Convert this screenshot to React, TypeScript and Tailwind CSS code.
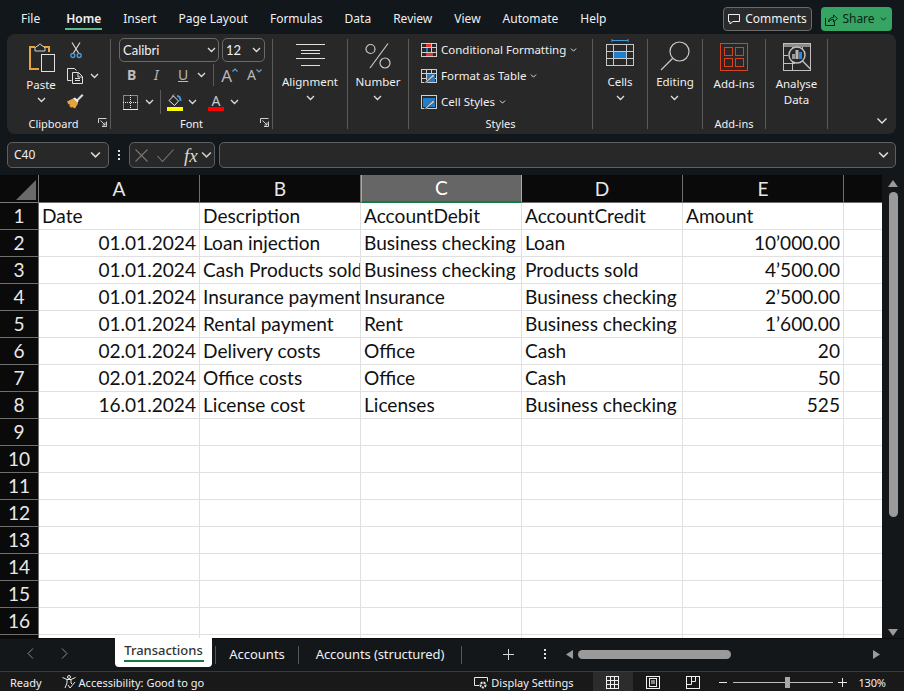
import type { ReactNode } from "react";

const uiFont = "font-['Noto_Sans','Open_Sans',sans-serif]";

const tabs = ["File", "Home", "Insert", "Page Layout", "Formulas", "Data", "Review", "View", "Automate", "Help"];
const columns = ["A", "B", "C", "D", "E"];

type Row = { date?: string; desc?: string; debit?: string; credit?: string; amount?: string };

const rows: Row[] = [
  { date: "Date", desc: "Description", debit: "AccountDebit", credit: "AccountCredit", amount: "Amount" },
  { date: "01.01.2024", desc: "Loan injection", debit: "Business checking", credit: "Loan", amount: "10’000.00" },
  { date: "01.01.2024", desc: "Cash Products sold", debit: "Business checking", credit: "Products sold", amount: "4’500.00" },
  { date: "01.01.2024", desc: "Insurance payment", debit: "Insurance", credit: "Business checking", amount: "2’500.00" },
  { date: "01.01.2024", desc: "Rental payment", debit: "Rent", credit: "Business checking", amount: "1’600.00" },
  { date: "02.01.2024", desc: "Delivery costs", debit: "Office", credit: "Cash", amount: "20" },
  { date: "02.01.2024", desc: "Office costs", debit: "Office", credit: "Cash", amount: "50" },
  { date: "16.01.2024", desc: "License cost", debit: "Licenses", credit: "Business checking", amount: "525" },
  {}, {}, {}, {}, {}, {}, {}, {}, {},
];

function Chevron({ className = "" }: { className?: string }) {
  return (
    <svg width="9" height="6" viewBox="0 0 9 6" fill="none" stroke="currentColor" strokeWidth="1.3" className={className}>
      <path d="M1 1l3.5 3.5L8 1" />
    </svg>
  );
}

function Launcher() {
  return (
    <svg width="9" height="9" viewBox="0 0 9 9" fill="none" stroke="#cfcfcf" strokeWidth="1">
      <path d="M.5 5V.5H8.500M8.500 3.500V8.500H4M2.500 2.500L7 7M7 4.500V7H4.500" />
    </svg>
  );
}

function Group({ width, label, children, launcher, pad = "", labelShift = "" }: { width: string; label?: string; children: ReactNode; launcher?: boolean; pad?: string; labelShift?: string }) {
  return (
    <div className={`${width} flex flex-col h-[90px] border-r border-[#5a5a5a] shrink-0`}>
      <div className={`flex-1 min-h-0 ${pad}`}>{children}</div>
      <div className={`h-[15px] pt-[3px] flex items-center justify-center relative text-[11px] text-[#f0f0f0] leading-none ${labelShift}`}>
        {label}
        {launcher && (
          <span className="absolute right-[3px] top-[4px]">
            <Launcher />
          </span>
        )}
      </div>
    </div>
  );
}

function BigButton({ icon, text }: { icon: ReactNode; text: string }) {
  return (
    <div className="flex flex-col items-center text-[11.5px] leading-[12px] text-[#f0f0f0]">
      <div className="h-[37px] flex items-start justify-center">{icon}</div>
      <span>{text}</span>
      <Chevron className="mt-[7px] text-[#e0e0e0]" />
    </div>
  );
}

function PasteIcon() {
  return (
    <svg width="28" height="30" viewBox="0 0 28 30" fill="none">
      <path d="M7 4H2v22h9" stroke="#e8a33d" strokeWidth="2" />
      <path d="M16 4h5v5" stroke="#e8a33d" strokeWidth="2" />
      <path d="M7 5l2-2h1l1.500-2h1L14 3h1l2 2v3H7z" stroke="#d0d0d0" strokeWidth="1" />
      <rect x="13.500" y="11.500" width="13" height="17" stroke="#e0e0e0" fill="#282828" />
    </svg>
  );
}

function ScissorsIcon() {
  return (
    <svg width="12" height="17" viewBox="0 0 12 17" fill="none">
      <path d="M2 .5L8.500 11M10 .5L3.500 11" stroke="#d8d8d8" strokeWidth="1.200" />
      <circle cx="2.800" cy="13.500" r="2" stroke="#4a9fe0" strokeWidth="1.300" />
      <circle cx="9.200" cy="13.500" r="2" stroke="#4a9fe0" strokeWidth="1.300" />
    </svg>
  );
}

function CopyIcon() {
  return (
    <svg width="17" height="16" viewBox="0 0 17 16" fill="none" stroke="#e0e0e0">
      <path d="M4.500 12.500H.5V.5h7l2 2" />
      <path d="M5.500 4.500h6l4 4v7h-10zM11 4.500v4.500h4.500M8 10.500h5M8 12.500h5" />
    </svg>
  );
}

function BrushIcon() {
  return (
    <svg width="17" height="16" viewBox="0 0 17 16" fill="none">
      <path d="M0 8.500l6-3 5 5-3 5L5 14l-1 1-1-2-1 .5L3 11l-1.500.5z" fill="#e8a33d" />
      <path d="M9 7l6-6 1.500 1.500-6 6z" fill="#d8d8d8" />
      <path d="M6 5.500l2-1 3.500 3.500-1 2z" fill="#f4f4f4" />
    </svg>
  );
}

function BordersIcon() {
  return (
    <svg width="15" height="15" viewBox="0 0 15 15" fill="none" stroke="#e8e8e8" strokeDasharray="1 1">
      <rect x=".5" y=".5" width="14" height="14" />
      <path d="M7.500 0v15M0 7.500h15" />
      <path d="M0 14.500h15" strokeDasharray="none" />
    </svg>
  );
}

function FillIcon() {
  return (
    <svg width="16" height="17" viewBox="0 0 16 17" fill="none">
      <path d="M2 6.500L6.500 2l5 5L7.500 11.500z" stroke="#e8e8e8" />
      <path d="M5 2.500l2-2" stroke="#e8e8e8" />
      <path d="M10 2c2.500 0 3.500 2 3.500 5" stroke="#3f9be0" strokeWidth="2" />
      <rect y="13" width="16" height="4" fill="#ffff00" />
    </svg>
  );
}

function GrowFontIcon({ size, up }: { size: number; up: boolean }) {
  return (
    <span className={`flex items-start text-[#b8b8b8] leading-none ${size === 17 ? "text-[17px]" : "text-[14px]"}`}>
      A
      <svg width="6" height="4" viewBox="0 0 6 4" fill="none" stroke="#5aa7e0" strokeWidth="1.200" className="mt-[1px]">
        <path d={up ? "M.5 3.500L3 1l2.500 2.500" : "M.5.5L3 3 5.500.5"} />
      </svg>
    </span>
  );
}

function AlignIcon() {
  return (
    <svg width="29" height="22" viewBox="0 0 29 22" stroke="#e0e0e0" className="mt-[5px]">
      <path d="M0 .5h29M5 6.500h19M0 14.500h29M5 21.500h19M5 9.500h19" />
    </svg>
  );
}

function PercentIcon() {
  return (
    <svg width="26" height="26" viewBox="0 0 26 26" fill="none" stroke="#c8c8c8" strokeWidth="1.200" className="mt-[4px]">
      <circle cx="5.500" cy="6" r="4.500" />
      <circle cx="20" cy="20" r="5" />
      <path d="M23 .5L5 25" />
    </svg>
  );
}

function CondIcon() {
  return (
    <svg width="16" height="14" viewBox="0 0 16 14" fill="none">
      <rect x=".5" y=".5" width="15" height="13" stroke="#d0d0d0" />
      <path d="M5.500 0v14M10.500 0v14M0 4.500h16M0 9.500h16" stroke="#d0d0d0" />
      <rect x="5" y="1" width="5" height="3" fill="#e8352b" />
      <rect x="5" y="5" width="2" height="4" fill="#1e7fd0" />
      <rect x="5" y="10" width="7" height="3" fill="#e8352b" />
    </svg>
  );
}

function TableIcon({ solid }: { solid?: boolean }) {
  return (
    <svg width="16" height="15" viewBox="0 0 16 15" fill="none">
      <rect x=".5" y=".5" width="15" height="13" stroke="#d0d0d0" />
      {solid ? (
        <rect x="2" y="3" width="12" height="9" fill="#1e7fd0" />
      ) : (
        <>
          <path d="M5.500 0v14M10.500 0v14M0 4.500h16M0 9.500h16" stroke="#d0d0d0" />
          <rect x="6" y="5" width="8" height="8" fill="#1e7fd0" />
        </>
      )}
      <path d="M3 14l9-9 2 2-9 7z" fill="#bfbfbf" stroke="#282828" strokeWidth=".5" />
    </svg>
  );
}

function StyleRow({ icon, text }: { icon: ReactNode; text: string }) {
  return (
    <div className="flex items-center h-[26px]">
      <span className="w-[16px] h-[15px] flex mr-[4px]">{icon}</span>
      <span className="text-[11.5px] text-[#f0f0f0] whitespace-nowrap leading-none">{text}</span>
      <Chevron className="ml-[3px] scale-75 text-[#e0e0e0]" />
    </div>
  );
}

function CellsIcon() {
  return (
    <svg width="28" height="28" viewBox="0 0 28 28" fill="none">
      <path d="M6 1.500h16M6 0v3M22 0v3" stroke="#3f9be0" />
      <rect x=".5" y="5.500" width="27" height="21" stroke="#c8c8c8" />
      <path d="M7.500 5v22M20.500 5v22M0 12.500h28M0 19.500h28" stroke="#c8c8c8" />
      <rect x="8" y="13" width="12" height="6" fill="#1e7fd0" />
    </svg>
  );
}

function SearchIcon() {
  return (
    <svg width="30" height="30" viewBox="0 0 30 30" fill="none" stroke="#c8c8c8" strokeWidth="1.200" className="mt-[2px]">
      <circle cx="19.500" cy="10.500" r="9.500" />
      <path d="M12.500 17.500L1 29" />
    </svg>
  );
}

function AddinsIcon() {
  return (
    <svg width="28" height="28" viewBox="0 0 28 28" fill="none" stroke="#d9421c">
      <rect x=".5" y=".5" width="27" height="27" />
      <rect x="4.500" y="4.500" width="8" height="8" />
      <rect x="15.500" y="4.500" width="8" height="8" />
      <rect x="4.500" y="15.500" width="8" height="8" />
      <rect x="15.500" y="15.500" width="8" height="8" />
    </svg>
  );
}

function AnalyseIcon() {
  return (
    <svg width="28" height="28" viewBox="0 0 28 28" fill="none" stroke="#c0c0c0">
      <rect x=".5" y=".5" width="27" height="27" />
      <rect x="1" y="1" width="26" height="3" fill="#8a8a8a" stroke="none" />
      <path d="M9.500 4v24M19.500 4v6M0 20.500h12M0 12.500h5" />
      <circle cx="14" cy="12" r="8" fill="#282828" strokeWidth="1.500" />
      <path d="M19.500 18l8 8" strokeWidth="1.500" />
      <rect x="9" y="11" width="3" height="5" fill="#9a9a9a" stroke="none" />
      <rect x="12.500" y="7" width="3" height="9" fill="#b8b8b8" stroke="none" />
      <rect x="16" y="9" width="3" height="7" fill="#2a8ae0" stroke="none" />
    </svg>
  );
}

function Ribbon() {
  return (
    <div className={`h-[100px] ml-[7px] w-[889px] rounded-[8px] bg-[#282828] flex pt-[5px] shrink-0 text-[#f0f0f0] ${uiFont}`}>
      <Group width="w-[104px]" label="Clipboard" launcher labelShift="pr-[10px]">
        <div className="flex pl-[20px] pt-[4px]">
          <div className="flex flex-col items-center w-[28px]">
            <span className="ml-[2px]"><PasteIcon /></span>
            <span className="text-[11.5px] leading-none mt-[6px]">Paste</span>
            <Chevron className="mt-[6px] text-[#e0e0e0]" />
          </div>
          <div className="flex flex-col ml-[12px] gap-[9px] -mt-[1px]">
            <span className="pl-[3px]"><ScissorsIcon /></span>
            <span className="flex items-center gap-[6px]"><CopyIcon /><Chevron className="text-[#e0e0e0]" /></span>
            <BrushIcon />
          </div>
        </div>
      </Group>
      <Group width="w-[162px]" label="Font" launcher pad="pl-[8px]">
        <div className="flex gap-[3px] -mt-[1px]">
          <div className="w-[100px] h-[24px] border border-[#6a6a6a] rounded-[5px] flex items-center justify-between px-[2px] text-[13px] leading-none font-['Lato',sans-serif]">
            <span className="pl-[1px]">Calibri</span>
            <Chevron className="text-[#e0e0e0]" />
          </div>
          <div className="w-[43px] h-[24px] border border-[#6a6a6a] rounded-[5px] flex items-center justify-between px-[3px] text-[13px] leading-none font-['Lato',sans-serif]">
            <span>12</span>
            <Chevron className="text-[#e0e0e0]" />
          </div>
        </div>
        <div className="flex items-center h-[22px] mt-[2px] text-[#b8b8b8] leading-none">
          <span className="w-[12px] ml-[8px] font-bold text-[14px] text-[#bdbdbd]">B</span>
          <span className="w-[12px] ml-[15px] italic text-[14px]">I</span>
          <span className="ml-[12px] underline text-[14px]">U</span>
          <Chevron className="ml-[9px] text-[#dddddd]" />
          <span className="w-px h-[22px] bg-[#5a5a5a] ml-[7px]" />
          <span className="ml-[7px]"><GrowFontIcon size={17} up /></span>
          <span className="ml-[9px]"><GrowFontIcon size={14} up={false} /></span>
        </div>
        <div className="flex items-center h-[24px] mt-[4px] ml-[4px]">
          <BordersIcon />
          <Chevron className="ml-[7px] text-[#dddddd]" />
          <span className="w-px h-[24px] bg-[#5a5a5a] ml-[6px]" />
          <span className="ml-[6px]"><FillIcon /></span>
          <Chevron className="ml-[5px] text-[#dddddd]" />
          <span className="ml-[11px] w-[16px] flex flex-col items-center text-[14px] leading-[13px] text-[#c8c8c8]">
            A
            <span className="w-[16px] h-[4px] bg-[#ff0000]" />
          </span>
          <Chevron className="ml-[6px] text-[#dddddd]" />
        </div>
      </Group>
      <Group width="w-[75px]" pad="flex justify-center">
        <BigButton icon={<AlignIcon />} text="Alignment" />
      </Group>
      <Group width="w-[61px]" pad="flex justify-center">
        <BigButton icon={<PercentIcon />} text="Number" />
      </Group>
      <Group width="w-[184px]" label="Styles" pad="pl-[12px] -mt-[2px]">
        <StyleRow icon={<CondIcon />} text="Conditional Formatting" />
        <StyleRow icon={<TableIcon />} text="Format as Table" />
        <StyleRow icon={<TableIcon solid />} text="Cell Styles" />
      </Group>
      <Group width="w-[55px]" pad="flex justify-center">
        <BigButton icon={<CellsIcon />} text="Cells" />
      </Group>
      <Group width="w-[55px]" pad="flex justify-center">
        <BigButton icon={<SearchIcon />} text="Editing" />
      </Group>
      <Group width="w-[63px]" label="Add-ins" pad="flex flex-col items-center pt-[4px]">
        <AddinsIcon />
        <span className="text-[11.5px] leading-none mt-[7px] text-[#f0f0f0]">Add-ins</span>
      </Group>
      <Group width="w-[62px]" pad="flex flex-col items-center pt-[4px]">
        <AnalyseIcon />
        <span className="text-[11.5px] leading-[16px] mt-[5px] text-center text-[#f0f0f0]">
          Analyse
          <br />
          Data
        </span>
      </Group>
      <div className="flex-1 flex items-end justify-end pr-[9px] pb-[10px]">
        <svg width="10" height="6" viewBox="0 0 10 6" fill="none" stroke="#e8e8e8" strokeWidth="1.300">
          <path d="M.5.5L5 5 9.500.5" />
        </svg>
      </div>
    </div>
  );
}

function TopBar() {
  return (
    <div className={`h-[34px] flex items-start shrink-0 ${uiFont}`}>
      <div className="flex pl-[21px] gap-[22px] pt-[10px] text-[12px] leading-[18px] text-[#f0f0f0] flex-1">
        {tabs.map((t) => (
          <div key={t} className={`relative whitespace-nowrap ${t === "Home" ? "font-semibold w-[37px] text-center ml-[3px] -mr-[1px]" : ""}`}>
            {t}
            {t === "Home" && <div className="absolute left-0 right-0 top-[18px] h-[2px] bg-[#5fb98a]" />}
          </div>
        ))}
      </div>
      <div className="flex gap-[9px] mt-[7px] mr-[12px]">
        <div className="w-[89px] h-[24px] rounded-[4px] border border-[#6a6a6a] bg-[#2a2a2a] flex items-center justify-center gap-[5px] text-[12px] text-[#f0f0f0]">
          <svg width="12" height="12" viewBox="0 0 12 12" fill="none" stroke="#f0f0f0">
            <path d="M.5 1.500h11v7H5L2 11V8.500H.5z" />
          </svg>
          Comments
        </div>
        <div className="w-[71px] h-[24px] rounded-[4px] bg-[#36a563] flex items-center justify-center gap-[4px] text-[12px] text-[#0c2416]">
          <svg width="13" height="13" viewBox="0 0 13 13" fill="none" stroke="#0c2416">
            <path d="M.5 5v7.500h9V9M3.500 9c0-3 2-4.500 5-4.500V2l4 3.500-4 3.500V6.500c-2 0-4 .5-5 2.500z" />
          </svg>
          Share
          <Chevron className="scale-75" />
        </div>
      </div>
    </div>
  );
}

function FormulaBar() {
  return (
    <div className={`flex items-stretch h-[26px] mt-[8px] mx-[7px] w-[889px] shrink-0 text-[12px] text-[#f0f0f0] ${uiFont}`}>
      <div className="w-[102px] rounded-[5px] border border-[#5f5f5f] bg-[#282828] flex items-center justify-between pl-[6px] pr-[8px]">
        C40
        <Chevron className="text-[#d8d8d8] scale-125" />
      </div>
      <div className="w-[20px] flex flex-col items-center justify-center gap-[2px]">
        <span className="w-[2px] h-[2px] bg-[#e0e0e0]" />
        <span className="w-[2px] h-[2px] bg-[#e0e0e0]" />
        <span className="w-[2px] h-[2px] bg-[#e0e0e0]" />
      </div>
      <div className="w-[86px] rounded-[5px] border border-[#5f5f5f] bg-[#282828] flex items-center pl-[5px]">
        <svg width="13" height="13" viewBox="0 0 13 13" stroke="#777" strokeWidth="1.100"><path d="M.5.5l12 12M12.500.5L.5 12.500" /></svg>
        <svg width="17" height="13" viewBox="0 0 17 13" fill="none" stroke="#777" strokeWidth="1.100" className="ml-[9px]"><path d="M.5 7l5 5.500L16.500.5" /></svg>
        <span className="ml-[10px] font-['Liberation_Serif',serif] italic text-[19px] text-[#d8d8d8] leading-none">fx</span>
        <Chevron className="ml-[4px] text-[#c8c8c8] scale-125" />
      </div>
      <div className="w-[4px]" />
      <div className="flex-1 rounded-[5px] border border-[#5f5f5f] bg-[#282828] flex items-center justify-end pr-[7px]">
        <Chevron className="text-[#d8d8d8] scale-125" />
      </div>
    </div>
  );
}

function Sheet() {
  const cell = "border-r border-b border-[#e0e0e0] overflow-hidden whitespace-nowrap px-[3px] flex items-center";
  return (
    <div className="flex-1 min-w-0 grid grid-cols-[39px_repeat(5,161px)_38px] grid-rows-[28px] auto-rows-[27px] overflow-hidden font-['Lato','Carlito',sans-serif] text-[19.1px] text-[#111111] leading-none">
      <div className="bg-[#0a0a0a] border-r border-b border-[#7a7a7a] flex items-end justify-end pr-[2px] pb-[2px]">
        <svg width="20" height="20" viewBox="0 0 20 20"><path d="M20 0v20H0z" fill="#6a6a6a" /></svg>
      </div>
      {columns.map((c) => (
        <div
          key={c}
          className={`flex items-center justify-center ${c === "C" ? "bg-[#666666] border-x border-b-2 border-x-[#a8a8a8] border-b-[#107c41] text-white" : "border-r border-b bg-[#0a0a0a] border-[#6f6f6f] text-[#e8e8e8]"}`}
        >
          {c}
        </div>
      ))}
      <div className="bg-[#0a0a0a] border-b border-[#6f6f6f]" />
      {rows.map((r, i) => (
        <div key={i} className="contents">
          {/* row 17 only shows a sliver under the tabs, its number stays hidden */}
          <div className="bg-[#0a0a0a] text-[#e8e8e8] border-r border-b border-[#6f6f6f] flex items-center justify-center">{i < 16 ? i + 1 : ""}</div>
          <div className={`${cell} bg-white ${i > 0 ? "justify-end" : ""}`}>{r.date}</div>
          <div className={`${cell} bg-white`}>{r.desc}</div>
          <div className={`${cell} bg-white`}>{r.debit}</div>
          <div className={`${cell} bg-white`}>{r.credit}</div>
          <div className={`${cell} bg-white ${i > 0 ? "justify-end" : ""}`}>{r.amount}</div>
          <div className="border-b border-[#e0e0e0] bg-white" />
        </div>
      ))}
    </div>
  );
}

function VerticalScroll() {
  return (
    <div className="w-[22px] bg-[#14171a] flex flex-col items-center shrink-0">
      <svg width="10" height="7" viewBox="0 0 10 7" className="mt-[5px]"><path d="M5 0l5 7H0z" fill="#9a9a9a" /></svg>
      <div className="w-[9px] h-[325px] rounded-full bg-[#9a9a9a] mt-[5px]" />
      <div className="flex-1" />
      <svg width="10" height="7" viewBox="0 0 10 7" className="mb-[2px]"><path d="M5 7l5-7H0z" fill="#9a9a9a" /></svg>
    </div>
  );
}

function SheetTabs() {
  return (
    <div className={`h-[33px] bg-[#14171a] flex items-start shrink-0 text-[13px] text-[#f0f0f0] leading-none border-t border-[#0c0c0c] ${uiFont}`}>
      <div className="w-[115px] h-[29px] flex items-center pl-[27px] gap-[27px] text-[#8c8c8c]">
        <svg width="7" height="11" viewBox="0 0 7 11" fill="none" stroke="currentColor"><path d="M6 .5l-5 5 5 5" /></svg>
        <svg width="7" height="11" viewBox="0 0 7 11" fill="none" stroke="currentColor"><path d="M1 .5l5 5-5 5" /></svg>
      </div>
      <div className="w-[97px] h-[29px] -mt-[1px] bg-white rounded-b-[4px] text-[#333333] font-medium flex flex-col items-center pt-[6px]">
        <span>Transactions</span>
        <span className="w-[80px] h-[2px] bg-[#107c41] mt-[3px]" />
      </div>
      <div className="w-[3px]" />
      <div className="w-px h-[18px] bg-[#555555] mt-[7px]" />
      <div className="w-[82px] h-[30px] flex items-center justify-center">Accounts</div>
      <div className="w-px h-[18px] bg-[#555555] mt-[7px]" />
      <div className="w-[162px] h-[30px] flex items-center justify-center whitespace-nowrap tracking-[-0.1px]">Accounts (structured)</div>
      <div className="w-px h-[18px] bg-[#555555] mt-[7px]" />
      <div className="w-[41px]" />
      <svg width="11" height="11" viewBox="0 0 11 11" stroke="#d8d8d8" className="mt-[10px]"><path d="M5.500 0v11M0 5.500h11" /></svg>
      <div className="w-[51px] h-[30px] flex flex-col items-center justify-center gap-[2px] pl-[11px]">
        <span className="w-[2px] h-[2px] bg-[#e0e0e0]" />
        <span className="w-[2px] h-[2px] bg-[#e0e0e0]" />
        <span className="w-[2px] h-[2px] bg-[#e0e0e0]" />
      </div>
      <div className="w-[318px] h-[30px] flex items-center">
        <svg width="7" height="9" viewBox="0 0 7 9" className="ml-[1px]"><path d="M0 4.500L7 0v9z" fill="#9a9a9a" /></svg>
        <div className="w-[153px] h-[9px] rounded-full bg-[#9a9a9a] ml-[5px]" />
        <div className="flex-1" />
        <svg width="7" height="9" viewBox="0 0 7 9" className="mr-[3px]"><path d="M7 4.500L0 0v9z" fill="#9a9a9a" /></svg>
      </div>
    </div>
  );
}

function StatusBar() {
  return (
    <div className={`h-[21px] bg-[#191919] border-t border-[#3a3a3a] flex items-center shrink-0 text-[11px] text-[#f0f0f0] leading-none ${uiFont}`}>
      <span className="ml-[10px]">Ready</span>
      <svg width="15" height="14" viewBox="0 0 15 14" fill="none" stroke="#e8e8e8" className="ml-[20px]">
        <circle cx="7" cy="2" r="1.500" />
        <path d="M.5 2.500L5 4.500h4l4.500-2M5 4.500V8L3 13M9 4.500V8l1 1M6 10l2 3 5-6" />
      </svg>
      <span className="ml-[2px]">Accessibility: Good to go</span>
      <svg width="14" height="13" viewBox="0 0 14 13" fill="none" stroke="#e8e8e8" className="ml-[270px]">
        <path d="M5 9.500H.5v-8h13v4" />
        <circle cx="9" cy="9" r="2.500" strokeWidth="2" strokeDasharray="2 1" />
      </svg>
      <span className="ml-[3px]">Display Settings</span>
      <div className="ml-[19px] w-[40px] h-[20px] bg-[#2c2c2c] flex items-center justify-center">
        <svg width="13" height="13" viewBox="0 0 13 13" fill="none" stroke="#f0f0f0"><rect x=".5" y=".5" width="12" height="12" /><path d="M4.500 0v13M8.500 0v13M0 4.500h13M0 8.500h13" /></svg>
      </div>
      <div className="w-[40px] h-[20px] flex items-center justify-center">
        <svg width="14" height="13" viewBox="0 0 14 13" fill="none" stroke="#f0f0f0"><rect x=".5" y=".5" width="13" height="12" /><rect x="3.500" y="2.500" width="7" height="8" /><path d="M5 5h4M5 7h4" /></svg>
      </div>
      <div className="w-[40px] h-[20px] flex items-center justify-center">
        <svg width="14" height="13" viewBox="0 0 14 13" fill="none" stroke="#f0f0f0"><rect x=".5" y=".5" width="13" height="12" /><path d="M.5 8.500h5v-8M5.500 5.500h4v-5" /></svg>
      </div>
      <svg width="9" height="9" viewBox="0 0 9 9" stroke="#e8e8e8" className="ml-[6px]"><path d="M0 4.500h8" /></svg>
      <div className="ml-[5px] w-[100px] flex items-center">
        <div className="flex-[55] h-px bg-[#bdbdbd]" />
        <div className="w-[5px] h-[11px] bg-[#a8a8a8]" />
        <div className="flex-[45] h-px bg-[#bdbdbd]" />
      </div>
      <svg width="9" height="9" viewBox="0 0 9 9" stroke="#e8e8e8" className="ml-[5px]"><path d="M0 4.500h9M4.500 0v9" /></svg>
      <span className="ml-[12px] tracking-[-0.2px]">130%</span>
    </div>
  );
}

export default function App() {
  return (
    <div className="w-[904px] h-[691px] bg-[#12171c] flex flex-col overflow-hidden">
      <TopBar />
      <Ribbon />
      <FormulaBar />
      <div className="h-[463px] mt-[7px] flex shrink-0">
        <Sheet />
        <VerticalScroll />
      </div>
      <SheetTabs />
      <StatusBar />
    </div>
  );
}
